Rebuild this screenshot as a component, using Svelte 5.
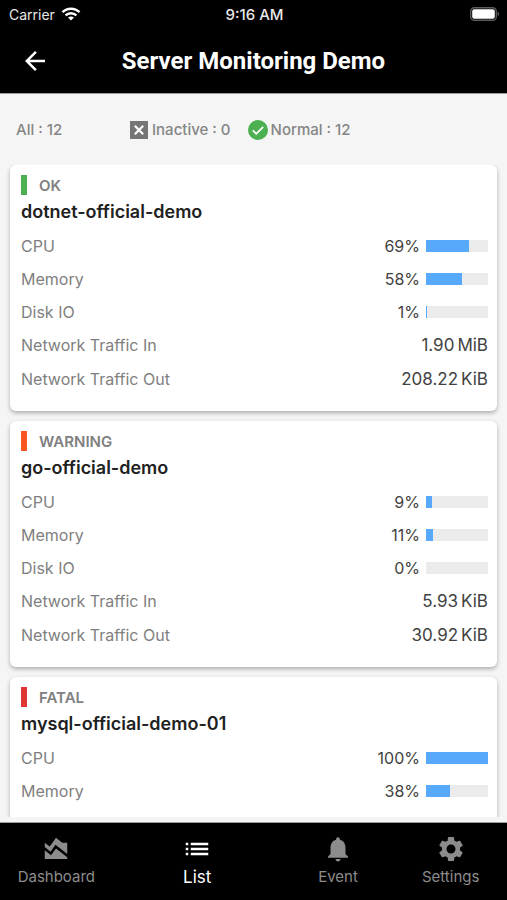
<script lang="ts">
  type Host = {
    status: string;
    level: 'ok' | 'warning' | 'fatal';
    name: string;
    usage: { label: string; percent: number }[];
    traffic: { label: string; value: string; unit: string }[];
  };

  const hosts: Host[] = [
    {
      status: 'OK',
      level: 'ok',
      name: 'dotnet-official-demo',
      usage: [
        { label: 'CPU', percent: 69 },
        { label: 'Memory', percent: 58 },
        { label: 'Disk IO', percent: 1 },
      ],
      traffic: [
        { label: 'Network Traffic In', value: '1.90', unit: 'MiB' },
        { label: 'Network Traffic Out', value: '208.22', unit: 'KiB' },
      ],
    },
    {
      status: 'WARNING',
      level: 'warning',
      name: 'go-official-demo',
      usage: [
        { label: 'CPU', percent: 9 },
        { label: 'Memory', percent: 11 },
        { label: 'Disk IO', percent: 0 },
      ],
      traffic: [
        { label: 'Network Traffic In', value: '5.93', unit: 'KiB' },
        { label: 'Network Traffic Out', value: '30.92', unit: 'KiB' },
      ],
    },
    {
      status: 'FATAL',
      level: 'fatal',
      name: 'mysql-official-demo-01',
      usage: [
        { label: 'CPU', percent: 100 },
        { label: 'Memory', percent: 38 },
      ],
      traffic: [],
    },
  ];

  const tabs = [
    {
      label: 'Dashboard',
      icon: 'M3 13v7h18v-1.5l-9-7L8 17l-5-4zM3 7l4 3 5-7 5 4h4v8.97l-9.4-7.31-3.98 5.48L3 10.44V7z',
    },
    {
      label: 'List',
      icon: 'M3 13h2v-2H3v2zm0 4h2v-2H3v2zm0-8h2V7H3v2zm4 4h14v-2H7v2zm0 4h14v-2H7v2zM7 7v2h14V7H7z',
    },
    {
      label: 'Event',
      icon: 'M12 22c1.1 0 2-.9 2-2h-4c0 1.1.89 2 2 2zm6-6v-5c0-3.07-1.64-5.64-4.5-6.32V4c0-.83-.67-1.5-1.5-1.5s-1.5.67-1.5 1.5v.68C7.63 5.36 6 7.92 6 11v5l-2 2v1h16v-1l-2-2z',
    },
    {
      label: 'Settings',
      icon: 'M19.14 12.94c.04-.3.06-.61.06-.94 0-.32-.02-.64-.07-.94l2.03-1.58c.18-.14.23-.41.12-.61l-1.92-3.32c-.12-.22-.37-.29-.59-.22l-2.39.96c-.5-.38-1.03-.7-1.62-.94l-.36-2.54c-.04-.24-.24-.41-.48-.41h-3.84c-.24 0-.43.17-.47.41l-.36 2.54c-.59.24-1.13.57-1.62.94l-2.39-.96c-.22-.08-.47 0-.59.22L2.74 8.87c-.12.21-.08.47.12.61l2.03 1.58c-.05.3-.09.63-.09.94s.02.64.07.94l-2.03 1.58c-.18.14-.23.41-.12.61l1.92 3.32c.12.22.37.29.59.22l2.39-.96c.5.38 1.03.7 1.62.94l.36 2.54c.05.24.24.41.48.41h3.84c.24 0 .44-.17.47-.41l.36-2.54c.59-.24 1.13-.56 1.62-.94l2.39.96c.22.08.47 0 .59-.22l1.92-3.32c.12-.22.07-.47-.12-.61l-2.01-1.58zM12 15.6c-1.98 0-3.6-1.62-3.6-3.6s1.62-3.6 3.6-3.6 3.6 1.62 3.6 3.6-1.62 3.6-3.6 3.6z',
    },
  ];

  let activeTab = $state('List');
</script>

<div class="app">
  <div class="statusbar">
    <div class="carrier">
      <span>Carrier</span>
      <svg width="20" height="14" viewBox="0 0 20 14" fill="none" stroke="#fff" stroke-width="2.4">
        <path d="M1.5 5.2C6.2.6 13.8.6 18.5 5.2" />
        <path d="M4.6 8.4c3-2.9 7.8-2.9 10.8 0" />
        <path d="M7 10.6c1.7-1.6 4.3-1.6 6 0L10 13.6z" fill="#fff" stroke="none" />
      </svg>
    </div>
    <span class="clock">9:16 AM</span>
    <div class="battery">
      <svg width="30" height="14" viewBox="0 0 30 14">
        <rect x="0.7" y="0.7" width="25.6" height="12.6" rx="3.6" fill="none" stroke="#5c5c5c" stroke-width="1.4" />
        <rect x="2.2" y="2.2" width="22.6" height="9.6" rx="2" fill="#fff" />
        <path d="M27.6 4.8c2 .6 2 3.8 0 4.4z" fill="#5c5c5c" />
      </svg>
    </div>
  </div>

  <header>
    <button class="back" aria-label="Back">
      <svg width="30" height="30" viewBox="0 0 24 24" fill="#fff">
        <path d="M20 11H7.83l5.59-5.59L12 4l-8 8 8 8 1.41-1.41L7.83 13H20v-2z" />
      </svg>
    </button>
    <h1>Server Monitoring Demo</h1>
  </header>

  <div class="summary">
    <span class="all">All : 12</span>
    <span class="count">
      <svg width="20" height="20" viewBox="0 0 20 20">
        <rect x="1" y="1" width="18" height="18" fill="#757575" />
        <path d="M5.8 5.8l8.4 8.4M14.2 5.8l-8.4 8.4" stroke="#fff" stroke-width="2.2" />
      </svg>
      Inactive : 0
    </span>
    <span class="count">
      <svg width="20" height="20" viewBox="0 0 20 20">
        <circle cx="10" cy="10" r="10" fill="#4caf50" />
        <path d="M4.8 10.4l3.4 3.4 7-7" fill="none" stroke="#fff" stroke-width="1.8" />
      </svg>
      Normal : 12
    </span>
  </div>

  <main>
    {#each hosts as host}
      <article class="card">
        <div class="status">
          <span class="mark {host.level}"></span>
          {host.status}
        </div>
        <h2>{host.name}</h2>
        {#each host.usage as row}
          <div class="row">
            <span class="label">{row.label}</span>
            <span class="value">{row.percent}%</span>
            <div class="bar" role="progressbar" aria-label={row.label} aria-valuenow={row.percent}>
              <div class="fill" style="width: {row.percent}%"></div>
            </div>
          </div>
        {/each}
        {#each host.traffic as row}
          <div class="row traffic">
            <span class="label">{row.label}</span>
            <span class="amount">{row.value}</span>
            <span class="amount unit">{row.unit}</span>
          </div>
        {/each}
      </article>
    {/each}
  </main>

  <nav>
    {#each tabs as tab}
      <button class="tab" class:active={activeTab === tab.label} onclick={() => (activeTab = tab.label)}>
        <svg width="30" height="30" viewBox="0 0 24 24" fill="currentColor">
          <path d={tab.icon} />
        </svg>
        <span>{tab.label}</span>
      </button>
    {/each}
  </nav>
</div>

<style>
  :global(body) {
    background: #f5f5f5;
  }

  .app {
    display: flex;
    flex-direction: column;
    height: 100vh;
    background: #f5f5f5;
    font-family: Inter, 'Liberation Sans', sans-serif;
    font-size: 16px;
    color: #424242;
  }

  svg {
    display: block;
    flex: none;
  }

  button {
    padding: 0;
    border: none;
    background: none;
    font: inherit;
    cursor: pointer;
  }

  .statusbar {
    display: grid;
    grid-template-columns: 1fr auto 1fr;
    align-items: center;
    height: 28px;
    padding: 0 7px 0 9px;
    background: #000;
    color: #e8e8e8;
    font-size: 14px;
  }

  .carrier {
    display: flex;
    align-items: center;
    gap: 6px;
  }

  .clock {
    font-size: 15px;
    font-weight: 500;
  }

  .battery {
    justify-self: end;
  }

  header {
    display: grid;
    grid-template-columns: 70px 1fr 70px;
    align-items: center;
    height: 65px;
    background: #000;
    border-bottom: 1px solid #9e9e9e;
  }

  .back {
    justify-self: center;
  }

  h1 {
    margin: 0;
    color: #fff;
    font-family: Roboto, sans-serif;
    font-size: 24px;
    font-weight: 700;
    text-align: center;
    white-space: nowrap;
  }

  .summary {
    display: flex;
    align-items: center;
    gap: 17px;
    height: 71px;
    padding: 0 16px;
    color: #858585;
    font-size: 15px;
    font-weight: 500;
  }

  .all {
    width: 96px;
  }

  .count {
    display: flex;
    align-items: center;
    gap: 3px;
  }

  main {
    display: flex;
    flex: 1;
    flex-direction: column;
    gap: 10px;
    min-height: 0;
    padding: 0 10px;
    overflow-y: auto;
    scrollbar-width: none;
  }

  .card {
    flex: none;
    padding: 10px 9px 15px 11px;
    border-radius: 6px;
    background: #fff;
    box-shadow: 0 2px 4px rgba(0, 0, 0, 0.3);
  }

  .status {
    display: flex;
    align-items: center;
    gap: 12px;
    height: 20px;
    color: #808080;
    font-size: 15px;
    font-weight: 600;
  }

  .mark {
    width: 6px;
    height: 20px;
  }

  .ok {
    background: #4caf50;
  }

  .warning {
    background: #ff5722;
  }

  .fatal {
    background: #e03535;
  }

  h2 {
    margin: 0;
    color: #212121;
    font-size: 18px;
    font-weight: 600;
    line-height: 34px;
  }

  .row {
    display: flex;
    align-items: center;
    height: 33px;
  }

  .traffic {
    height: 34px;
  }

  .label {
    flex: 1;
    color: #808080;
  }

  .bar {
    width: 62px;
    height: 12px;
    margin-left: 6px;
    background: #ebebeb;
  }

  .fill {
    height: 100%;
    background: #57a9fb;
  }

  .amount {
    font-size: 17px;
  }

  .unit {
    margin-left: 3px;
  }

  nav {
    display: flex;
    height: 77px;
    margin-top: 5px;
    border-top: 1px solid #9e9e9e;
    background: #000;
  }

  .tab {
    display: flex;
    flex: 2;
    flex-direction: column;
    align-items: center;
    gap: 3px;
    padding-top: 11px;
    color: #8c8c8c;
    font-size: 15px;
    line-height: 20px;
  }

  .active {
    flex: 3;
    color: #fff;
    font-size: 17px;
  }
</style>
